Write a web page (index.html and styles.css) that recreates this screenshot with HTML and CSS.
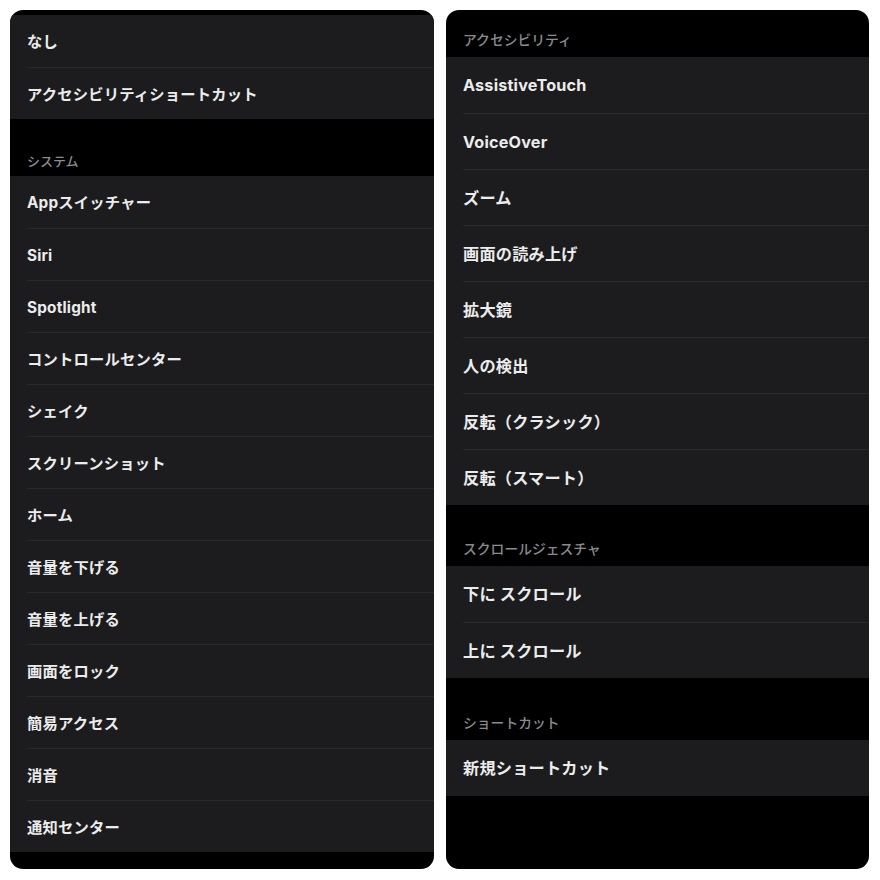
FILE: index.html
```html
<!DOCTYPE html>
<html lang="ja">
<head>
<meta charset="utf-8">
<title>Settings</title>
<link rel="stylesheet" href="styles.css">
</head>
<body>
<div class="page">
  <section class="panel panel-left">
    <div class="top-strip"></div>
    <ul class="group">
      <li class="row">なし</li>
      <li class="row">アクセシビリティショートカット</li>
    </ul>
    <div class="header"><span>システム</span></div>
    <ul class="group">
      <li class="row">Appスイッチャー</li>
      <li class="row">Siri</li>
      <li class="row">Spotlight</li>
      <li class="row">コントロールセンター</li>
      <li class="row">シェイク</li>
      <li class="row">スクリーンショット</li>
      <li class="row">ホーム</li>
      <li class="row">音量を下げる</li>
      <li class="row">音量を上げる</li>
      <li class="row">画面をロック</li>
      <li class="row">簡易アクセス</li>
      <li class="row">消音</li>
      <li class="row">通知センター</li>
    </ul>
  </section>
  <section class="panel panel-right">
    <div class="header header-first"><span>アクセシビリティ</span></div>
    <ul class="group">
      <li class="row">AssistiveTouch</li>
      <li class="row">VoiceOver</li>
      <li class="row">ズーム</li>
      <li class="row">画面の読み上げ</li>
      <li class="row">拡大鏡</li>
      <li class="row">人の検出</li>
      <li class="row">反転（クラシック）</li>
      <li class="row">反転（スマート）</li>
    </ul>
    <div class="header header-mid"><span>スクロールジェスチャ</span></div>
    <ul class="group">
      <li class="row">下に スクロール</li>
      <li class="row">上に スクロール</li>
    </ul>
    <div class="header header-last"><span>ショートカット</span></div>
    <ul class="group">
      <li class="row">新規ショートカット</li>
    </ul>
  </section>
</div>
</body>
</html>
```
FILE: styles.css
```css
html, body {
  margin: 0;
  padding: 0;
  background: #ffffff;
}
body {
  font-family: Inter, "Noto Sans CJK JP", "Noto Sans", sans-serif;
}
.page {
  display: flex;
  gap: 12px;
  padding: 10px 11px 11px 10px;
  height: 859px;
}
.panel {
  background: #000000;
  border-radius: 13px;
  overflow: hidden;
  display: flex;
  flex-direction: column;
}
.panel-left {
  width: 424px;
}
.panel-right {
  width: 423px;
}
.top-strip {
  height: 5px;
}
.group {
  list-style: none;
  margin: 0;
  padding: 0;
  background: #1c1c1e;
}
.row {
  display: flex;
  align-items: center;
  color: #ececec;
  font-weight: 700;
  line-height: 20px;
  letter-spacing: 0.2px;
  box-sizing: border-box;
}
.row + .row {
  border-top: 1px solid #29292b;
}
.panel-left .row {
  height: 52px;
  padding-left: 17px;
  padding-top: 2px;
  font-size: 15.3px;
}
.panel-left .row + .row {
  margin-left: 17px;
  padding-left: 0;
}
.panel-right .row {
  height: 56px;
  padding-left: 17px;
  font-size: 16.2px;
}
.panel-right .row + .row {
  margin-left: 17px;
  padding-left: 0;
}
.header {
  display: flex;
  align-items: flex-end;
  color: #8a8a8f;
  line-height: 16px;
  font-weight: 500;
}
.panel-left .header {
  height: 57px;
  padding: 0 0 7px 17px;
  font-size: 13px;
  box-sizing: border-box;
}
.panel-right .header {
  padding: 0 0 9px 17px;
  font-size: 13.8px;
  box-sizing: border-box;
}
.header-first {
  height: 47px;
}
.header-mid {
  height: 61px;
}
.header-last {
  height: 62px;
}
```
